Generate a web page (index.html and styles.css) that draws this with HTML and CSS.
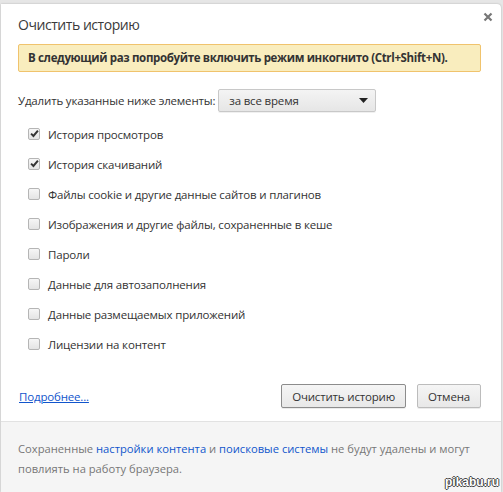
FILE: index.html
```html
<!DOCTYPE html>
<html lang="ru">
<head>
<meta charset="utf-8">
<title>Очистить историю</title>
<link rel="stylesheet" href="styles.css">
</head>
<body>
<div class="dialog">
  <div class="main">
    <div class="head">
      <h1 class="title">Очистить историю</h1>
      <button class="close" aria-label="Закрыть">
        <svg width="10" height="10" viewBox="0 0 10 10"><path d="M1.5 1.5 L8.5 8.5 M8.5 1.5 L1.5 8.5" stroke="#777" stroke-width="2.2" stroke-linecap="butt"/></svg>
      </button>
    </div>
    <div class="notice">В следующий раз попробуйте включить режим инкогнито (Ctrl+Shift+N).</div>
    <div class="period">
      <span>Удалить указанные ниже элементы:</span>
      <div class="select">
        <span>за все время</span>
        <svg width="9" height="5" viewBox="0 0 9 5"><path d="M0 0 H9 L4.5 5 Z" fill="#222"/></svg>
      </div>
    </div>
    <ul class="items">
      <li><span class="box"><svg width="10" height="9" viewBox="0 0 10 9"><path d="M1.2 4.6 L3.8 7.2 L8.8 1.2" fill="none" stroke="#333" stroke-width="2.2"/></svg></span>История просмотров</li>
      <li><span class="box"><svg width="10" height="9" viewBox="0 0 10 9"><path d="M1.2 4.6 L3.8 7.2 L8.8 1.2" fill="none" stroke="#333" stroke-width="2.2"/></svg></span>История скачиваний</li>
      <li><span class="box"></span>Файлы cookie и другие данные сайтов и плагинов</li>
      <li><span class="box"></span>Изображения и другие файлы, сохраненные в кеше</li>
      <li><span class="box"></span>Пароли</li>
      <li><span class="box"></span>Данные для автозаполнения</li>
      <li><span class="box"></span>Данные размещаемых приложений</li>
      <li><span class="box"></span>Лицензии на контент</li>
    </ul>
    <div class="actions">
      <a class="more" href="#">Подробнее...</a>
      <div class="buttons">
        <button class="btn primary">Очистить историю</button>
        <button class="btn">Отмена</button>
      </div>
    </div>
  </div>
  <div class="footer">
    <span>Сохраненные <a href="#">настройки контента</a> и <a href="#">поисковые системы</a> не будут удалены и могут</span><br>
    <span>повлиять на работу браузера.</span>
  </div>
  <span class="mark">pikabu.ru</span>
</div>
</body>
</html>
```

FILE: styles.css
```css
html, body {
  margin: 0;
  height: 100%;
}

body {
  background: #e6e6e6;
  font-family: "Open Sans", "Liberation Sans", sans-serif;
  font-size: 11.5px;
  letter-spacing: -0.17px;
  color: #333;
  overflow: hidden;
}

.dialog {
  position: relative;
  margin: 4px 2px 0 1px;
  height: 488px;
  background: #fff;
  border-radius: 0 4px 0 0;
  box-shadow: 0 0 2px rgba(0, 0, 0, 0.25);
  display: flex;
  flex-direction: column;
}

.main {
  padding: 0 20px 0 17px;
  flex: none;
  height: 417px;
}

.head {
  display: flex;
  justify-content: space-between;
  align-items: flex-start;
}

.title {
  margin: 11px 0 0;
  font-size: 14px;
  letter-spacing: -0.45px;
  line-height: 20px;
  font-weight: normal;
  color: #3a3a3a;
}

.close {
  margin: 8px -12px 0 0;
  padding: 0;
  border: 0;
  background: none;
  width: 10px;
  height: 10px;
  display: flex;
}

.notice {
  margin-top: 9px;
  height: 28px;
  box-sizing: border-box;
  background: #f9edbe;
  border: 1px solid #f0c36d;
  border-radius: 2px;
  padding: 0 9px;
  font-weight: bold;
  letter-spacing: -0.35px;
  white-space: nowrap;
  line-height: 26px;
  color: #333;
}

.period {
  margin-top: 17px;
  display: flex;
  align-items: center;
  gap: 3px;
}

.select {
  width: 158px;
  height: 23px;
  box-sizing: border-box;
  border: 1px solid #c8c8c8;
  border-radius: 2px;
  background: linear-gradient(#f4f4f4, #e6e6e6);
  box-shadow: 0 1px 0 rgba(0, 0, 0, 0.06);
  display: flex;
  align-items: center;
  justify-content: space-between;
  padding: 0 7px 0 10px;
}

.items {
  list-style: none;
  margin: 7px 0 0;
  padding: 0 0 0 10px;
}

.items li {
  height: 30px;
  display: flex;
  align-items: center;
}

.box {
  width: 10px;
  height: 10px;
  border: 1px solid #b5b5b5;
  border-radius: 2px;
  background: linear-gradient(#f6f6f6, #e4e4e4);
  margin-right: 8px;
  display: flex;
  align-items: center;
  justify-content: center;
  flex: none;
}

.box svg {
  margin: -1px 0 0 1px;
}

.actions {
  margin-top: 25px;
  display: flex;
  justify-content: space-between;
  align-items: center;
}

.more {
  color: #15c;
  text-decoration: underline;
  margin-left: 1px;
}

.buttons {
  display: flex;
  gap: 11px;
}

.btn {
  font: inherit;
  letter-spacing: inherit;
  color: #333;
  height: 24px;
  padding: 0 10px;
  border: 1px solid #bcbcbc;
  border-radius: 2px;
  background: linear-gradient(#f5f5f5, #e8e8e8);
  box-shadow: 0 1px 0 rgba(0, 0, 0, 0.08);
}

.btn.primary {
  border-color: #8c8c8c;
}

.footer {
  flex: 1;
  background: #f5f5f5;
  border-top: 1px solid #e2e2e2;
  padding: 17px 20px 0 17px;
  font-size: 11.2px;
  letter-spacing: 0;
  line-height: 20px;
  white-space: nowrap;
  color: #777;
}

.footer a {
  color: #15c;
  text-decoration: none;
}

.mark {
  position: absolute;
  right: 2px;
  bottom: 3px;
  font-family: "Liberation Sans", sans-serif;
  font-weight: bold;
  font-size: 12px;
  letter-spacing: 0;
  color: #fff;
  text-shadow: -1px 0 #444, 1px 0 #444, 0 -1px #444, 0 1px #444;
}
```
